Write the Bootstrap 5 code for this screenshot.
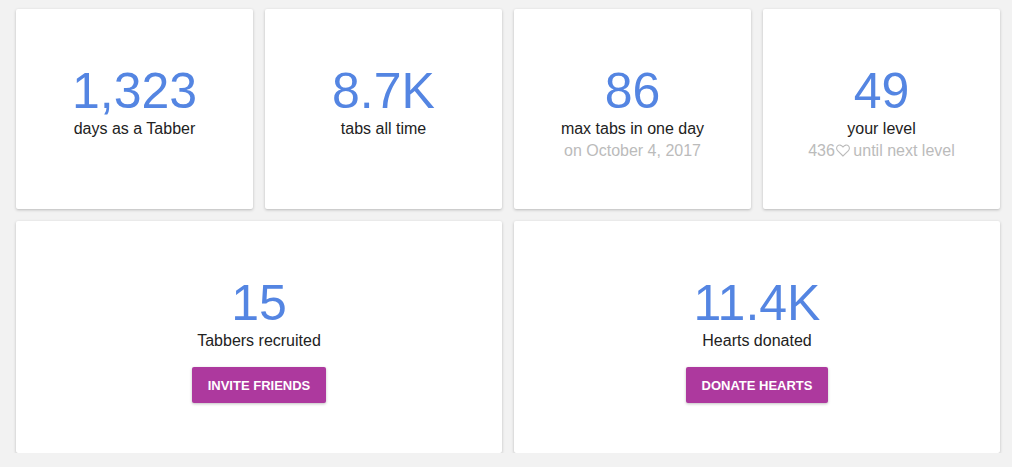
<!DOCTYPE html>
<html lang="en">
<head>
    <meta charset="UTF-8">
    <meta name="viewport" content="width=device-width, initial-scale=1.0">
    <title>Stats</title>
    <link rel="stylesheet" href="https://cdn.jsdelivr.net/npm/bootstrap@5.3.0/dist/css/bootstrap.min.css">
    <script src="https://cdn.jsdelivr.net/npm/bootstrap@5.3.0/dist/js/bootstrap.bundle.min.js"></script>
    <style>
        body {
            background: #f2f2f2;
            font-family: "Liberation Sans", Arial, sans-serif;
            overflow: hidden;
        }
        .stats-page {
            padding: 9px 12px 0 16px;
        }
        .stats-row {
            --bs-gutter-x: 12px;
            --bs-gutter-y: 12px;
        }
        .stat-card {
            border: 0;
            border-radius: 2px;
            box-shadow: 0 1px 3px rgba(0, 0, 0, 0.24);
            text-align: center;
        }
        .stat-small { height: 200px; padding-top: 53px; }
        .stat-large { height: 232px; padding-top: 53px; }
        .stat-num {
            color: #5485e2;
            font-size: 50px;
            line-height: 58px;
        }
        .stat-label {
            color: #222;
            font-size: 16px;
            line-height: 20px;
            margin-top: -1px;
        }
        .stat-sub {
            color: #bbb;
            font-size: 16px;
            line-height: 20px;
            margin-top: 2px;
        }
        .heart-icon {
            width: 14px;
            height: 13px;
            margin: 0 -1px 0 1px;
            vertical-align: -1px;
        }
        .invite-btn {
            background: #ad399e;
            border: 0;
            border-radius: 2px;
            box-shadow: 0 1px 3px rgba(0, 0, 0, 0.25);
            color: #fff;
            font-size: 13px;
            font-weight: 700;
            height: 36px;
            margin-top: 16px;
            padding: 2px 16px 0;
            text-transform: uppercase;
        }
        .invite-btn:hover { background: #9c338e; color: #fff; }
    </style>
</head>
<body>
    <div class="stats-page">
        <div class="row stats-row">
            <div class="col-3">
                <div class="card stat-card stat-small">
                    <div class="stat-num">1,323</div>
                    <div class="stat-label">days as a Tabber</div>
                </div>
            </div>
            <div class="col-3">
                <div class="card stat-card stat-small">
                    <div class="stat-num">8.7K</div>
                    <div class="stat-label">tabs all time</div>
                </div>
            </div>
            <div class="col-3">
                <div class="card stat-card stat-small">
                    <div class="stat-num">86</div>
                    <div class="stat-label">max tabs in one day</div>
                    <div class="stat-sub">on October 4, 2017</div>
                </div>
            </div>
            <div class="col-3">
                <div class="card stat-card stat-small">
                    <div class="stat-num">49</div>
                    <div class="stat-label">your level</div>
                    <div class="stat-sub">436<svg class="heart-icon" viewBox="0 0 14 13" fill="none" stroke="#bbb" stroke-width="1.1"><path d="M7 12 L1.8 6.8 C0.2 5.2 0.3 3 1.6 1.8 C3 0.6 5.2 0.7 7 3 C8.8 0.7 11 0.6 12.4 1.8 C13.7 3 13.8 5.2 12.2 6.8 Z"/></svg> until next level</div>
                </div>
            </div>
            <div class="col-6">
                <div class="card stat-card stat-large">
                    <div class="stat-num">15</div>
                    <div class="stat-label">Tabbers recruited</div>
                    <div><button type="button" class="btn invite-btn">Invite friends</button></div>
                </div>
            </div>
            <div class="col-6">
                <div class="card stat-card stat-large">
                    <div class="stat-num">11.4K</div>
                    <div class="stat-label">Hearts donated</div>
                    <div><button type="button" class="btn invite-btn">Donate hearts</button></div>
                </div>
            </div>
        </div>
    </div>
</body>
</html>
